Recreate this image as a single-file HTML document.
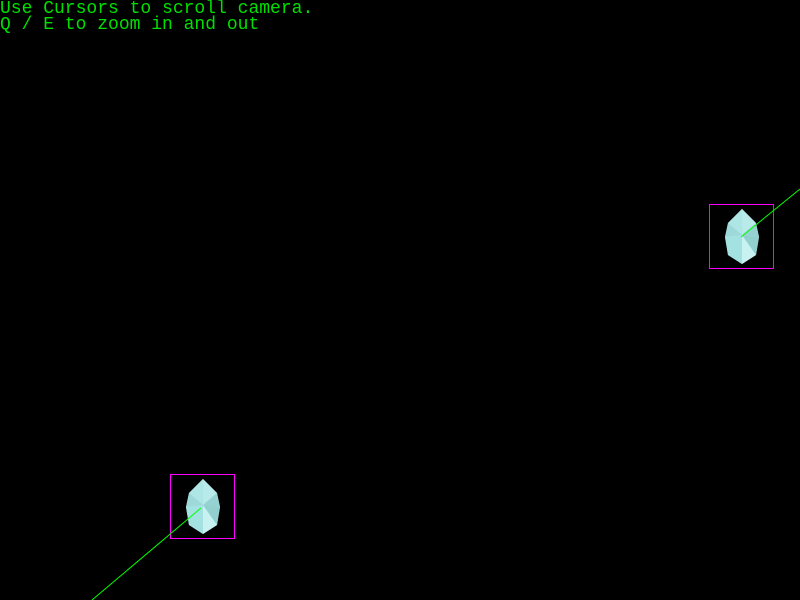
<!DOCTYPE html>
<html><head><meta charset="utf-8"><style>
html,body{margin:0;padding:0;background:#000;width:800px;height:600px;overflow:hidden}
.t{position:absolute;left:0;top:1px;font-family:"Liberation Mono",monospace;font-size:18px;line-height:16px;color:#00e000;white-space:pre}
svg{position:absolute;left:0;top:0}
</style></head><body>
<svg width="800" height="600" viewBox="0 0 800 600">
<defs>
<g id="c">
<polygon points="0,-28 14,-14 17,0 14,18 0,27 -14,18 -17,0 -14,-14" fill="#a6e2e2"/>
<polygon points="0,-28 14,-14 0,-2" fill="#b8eaea"/>
<polygon points="0,-28 -14,-14 0,-2" fill="#aee6e6"/>
<polygon points="-14,-14 -17,0 0,-2" fill="#9ed8d8"/>
<polygon points="14,-14 17,0 0,-2" fill="#96d2d2"/>
<polygon points="-17,0 -14,18 0,27 0,-2" fill="#a4e2e2"/>
<polygon points="0,-2 14,18 0,27" fill="#c8f2f2"/>
<polygon points="0,-2 17,0 14,18" fill="#92d0d0"/>
</g>
</defs>
<rect x="709.5" y="204.5" width="64" height="64" fill="none" stroke="#ff00ff" stroke-width="1"/>
<use href="#c" x="742" y="237"/>
<line x1="741" y1="237" x2="800" y2="189" stroke="#00ff00" stroke-width="1"/>
<rect x="170.5" y="474.5" width="64" height="64" fill="none" stroke="#ff00ff" stroke-width="1"/>
<use href="#c" x="203" y="507"/>
<line x1="201" y1="508" x2="92" y2="600" stroke="#00ff00" stroke-width="1"/>
</svg>
<div class="t">Use Cursors to scroll camera.
Q / E to zoom in and out</div>
</body></html>
